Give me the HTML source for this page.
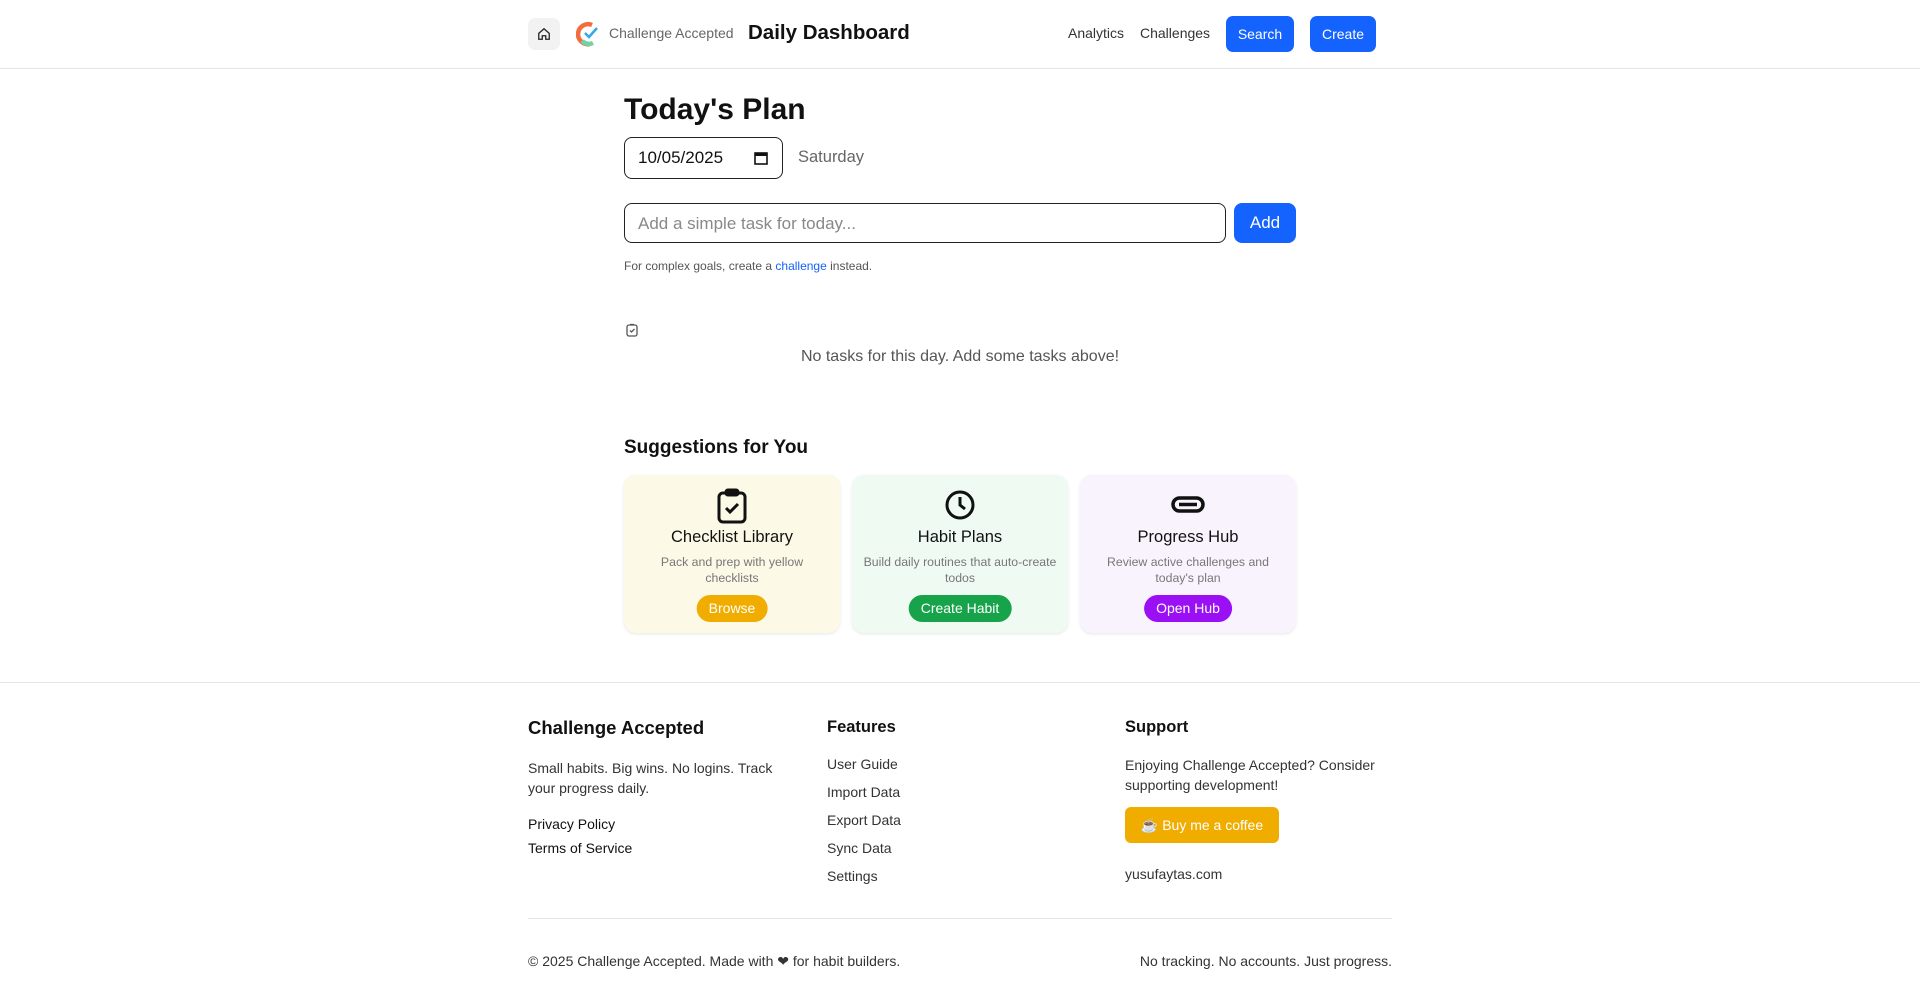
<!DOCTYPE html>
<html><head><meta charset="utf-8"><style>
*{box-sizing:border-box;margin:0;padding:0}
body{width:1920px;height:993px;overflow:hidden;background:#fff;font-family:"Liberation Sans",sans-serif;color:#111;position:relative}
.a{position:absolute;white-space:nowrap}
.hdr{position:absolute;left:0;top:0;width:1920px;height:69px;border-bottom:1px solid #e5e5e5}
.btn{position:absolute;background:#1463ff;color:#fff;border-radius:7px;font-size:14px;display:flex;align-items:center;justify-content:center}
.card{position:absolute;top:475px;width:216px;height:158px;border-radius:12px;box-shadow:0 1px 3px rgba(0,0,0,.1);text-align:center}
.card svg{position:absolute;left:92px;top:13px}
.card .t{position:absolute;top:53px;width:100%;font-size:16.5px;color:#111}
.card .d{position:absolute;top:79px;left:8px;right:8px;font-size:12.3px;color:#777;line-height:16px}
.card .b{position:absolute;top:120px;left:50%;transform:translateX(-50%);height:27px;border-radius:14px;color:#fff;font-size:14px;line-height:27px;padding:0 12px}
.f{font-size:14px;color:#333}
</style></head><body>
<div class="hdr"></div>
<div class="a" style="left:528px;top:18px;width:32px;height:32px;background:#f2f2f2;border-radius:7px;display:flex;align-items:center;justify-content:center">
<svg width="14" height="14" viewBox="0 0 24 24" fill="none" stroke="#222" stroke-width="2.2"><path d="M3 11L12 3l9 8v10h-6v-6h-6v6H3z"/></svg></div>
<svg class="a" style="left:576px;top:21px" width="24" height="26" viewBox="0 0 24 26"><path d="M16 4A10 10 0 1 0 14 23" stroke="#f26c3d" stroke-width="4.5" fill="none"/><path d="M6 20a10 10 0 0 0 11 2" stroke="#6fd3a8" stroke-width="4.5" fill="none"/><path d="M9 12l4 4 8-9" stroke="#34a8e8" stroke-width="2.5" fill="none"/></svg>
<div class="a" style="left:609px;top:25px;font-size:14px;color:#666">Challenge Accepted</div>
<div class="a" style="left:748px;top:21px;font-size:20.5px;font-weight:bold">Daily Dashboard</div>
<div class="a" style="left:1068px;top:25px;font-size:14px;color:#333">Analytics</div>
<div class="a" style="left:1140px;top:25px;font-size:14px;color:#333">Challenges</div>
<div class="btn" style="left:1226px;top:16px;width:68px;height:36px">Search</div>
<div class="btn" style="left:1310px;top:16px;width:66px;height:36px">Create</div>

<div class="a" style="left:624px;top:93px;font-size:30px;font-weight:bold">Today's Plan</div>
<div class="a" style="left:624px;top:137px;width:159px;height:42px;border:1px solid #222;border-radius:8px;font-size:17px;padding:10px 13px">10/05/2025
<svg style="position:absolute;right:14px;top:13px" width="14" height="14" viewBox="0 0 14 14"><rect x="1" y="2" width="12" height="11" fill="none" stroke="#111" stroke-width="1.6"/><rect x="1" y="2" width="12" height="3" fill="#111"/></svg></div>
<div class="a" style="left:798px;top:148px;font-size:16.5px;color:#666">Saturday</div>
<div class="a" style="left:624px;top:203px;width:602px;height:40px;border:1px solid #222;border-radius:8px;font-size:17px;color:#888;padding:10px 13px">Add a simple task for today...</div>
<div class="btn" style="left:1234px;top:203px;width:62px;height:40px;font-size:17px;border-radius:8px">Add</div>
<div class="a" style="left:624px;top:259px;font-size:12px;color:#555">For complex goals, create a <span style="color:#1463ff">challenge</span> instead.</div>
<svg class="a" style="left:626px;top:323px" width="12" height="14" viewBox="0 0 12 14" fill="none" stroke="#555" stroke-width="1.3"><rect x="1" y="2" width="10" height="11" rx="2"/><path d="M4 7.5l1.5 1.5 3-3"/><path d="M4 1.5h4"/></svg>
<div class="a" style="left:0;width:1920px;text-align:center;top:348px;font-size:16px;color:#555">No tasks for this day. Add some tasks above!</div>

<div class="a" style="left:624px;top:437px;font-size:19px;font-weight:bold">Suggestions for You</div>
<div class="card" style="left:624px;background:#fdf9e7">
<svg width="32" height="36" viewBox="0 0 32 36" fill="none" stroke="#111" stroke-width="3"><rect x="3" y="5" width="26" height="29" rx="4"/><rect x="10" y="2" width="12" height="5" rx="2" fill="#111"/><path d="M10 20l4 4 8-8"/></svg>
<div class="t">Checklist Library</div><div class="d">Pack and prep with yellow<br>checklists</div><div class="b" style="background:#f0ad00">Browse</div></div>
<div class="card" style="left:852px;background:#effbf2">
<svg width="32" height="32" viewBox="0 0 32 32" fill="none" stroke="#111" stroke-width="3"><circle cx="16" cy="17" r="13"/><path d="M16 9v8l5 4"/></svg>
<div class="t">Habit Plans</div><div class="d">Build daily routines that auto-create<br>todos</div><div class="b" style="background:#16a34a">Create Habit</div></div>
<div class="card" style="left:1080px;background:#f9f3fe">
<svg width="34" height="32" viewBox="0 0 34 32" fill="none" stroke="#111" stroke-width="3.5" style="left:91px"><rect x="2" y="10" width="30" height="13" rx="6.5"/><path d="M8 16.5h18"/></svg>
<div class="t">Progress Hub</div><div class="d">Review active challenges and<br>today's plan</div><div class="b" style="background:#9b0ff5">Open Hub</div></div>

<div class="a" style="left:0;top:682px;width:1920px;border-top:1px solid #e5e5e5"></div>
<div class="a" style="left:528px;top:717px;font-size:18.5px;font-weight:bold">Challenge Accepted</div>
<div class="a f" style="left:528px;top:758px;line-height:20px">Small habits. Big wins. No logins. Track<br>your progress daily.</div>
<div class="a" style="left:528px;top:816px;font-size:14px">Privacy Policy</div>
<div class="a" style="left:528px;top:840px;font-size:14px">Terms of Service</div>
<div class="a" style="left:827px;top:718px;font-size:16.5px;font-weight:bold">Features</div>
<div class="a f" style="left:827px;top:756px">User Guide</div>
<div class="a f" style="left:827px;top:784px">Import Data</div>
<div class="a f" style="left:827px;top:812px">Export Data</div>
<div class="a f" style="left:827px;top:840px">Sync Data</div>
<div class="a f" style="left:827px;top:868px">Settings</div>
<div class="a" style="left:1125px;top:718px;font-size:16.5px;font-weight:bold">Support</div>
<div class="a f" style="left:1125px;top:755px;line-height:20px">Enjoying Challenge Accepted? Consider<br>supporting development!</div>
<div class="a" style="left:1125px;top:807px;width:154px;height:36px;background:#f0ad00;border-radius:6px;color:#fff;font-size:14px;line-height:36px;text-align:center">☕ Buy me a coffee</div>
<div class="a f" style="left:1125px;top:866px">yusufaytas.com</div>
<div class="a" style="left:528px;top:918px;width:864px;border-top:1px solid #e5e5e5"></div>
<div class="a f" style="left:528px;top:953px">© 2025 Challenge Accepted. Made with ❤ for habit builders.</div>
<div class="a f" style="right:528px;top:953px">No tracking. No accounts. Just progress.</div>
</body></html>
